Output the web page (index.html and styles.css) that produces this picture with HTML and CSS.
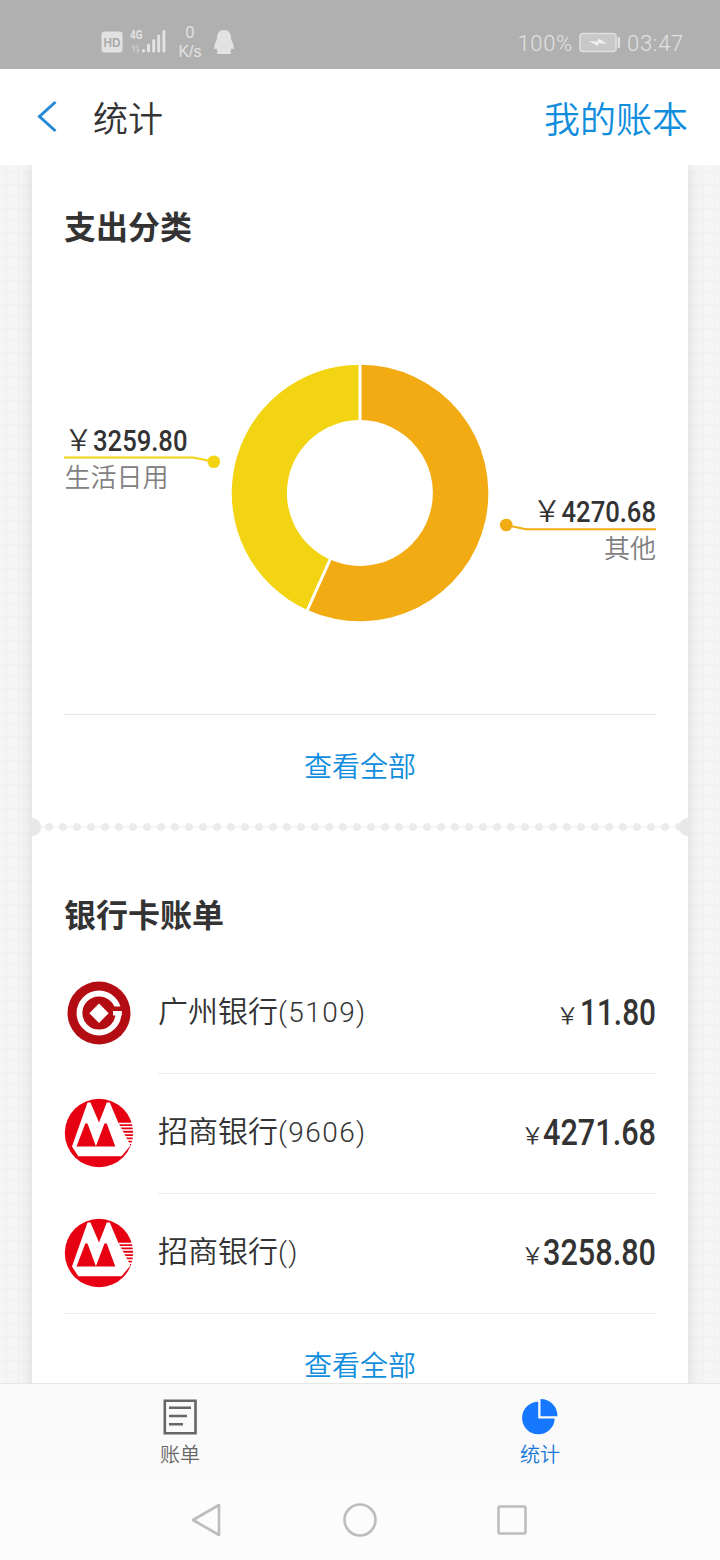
FILE: index.html
```html
<!DOCTYPE html>
<html lang="zh-CN">
<head>
<meta charset="utf-8">
<title>统计</title>
<link rel="stylesheet" href="styles.css">
</head>
<body>
<svg class="defs" width="0" height="0" aria-hidden="true">
  <symbol id="cmb" viewBox="0 0 70 70">
    <circle cx="35" cy="35" r="34.2" fill="#e60012"/>
    <path d="M23.500 4.500h3L35 24.500 42.800 4.500h3L54 24 66.500 47.500 57.500 58.300H14.300L8 48.500Z" fill="#fff"/>
    <path d="M21.300 25.500h2.200L32 48.500H12.500ZM40.500 25.500h2.200L51.300 48.500H31.800Z" fill="#e60012"/>
    <path d="M55 25.500H70M56 28.800H70M57.500 32.100H70M59 35.400H70M61 38.700H70M62.500 42H69.500M64 45.300H69" stroke="#fff" stroke-width="1.500"/>
  </symbol>
</svg>
<div class="screen">
  <header class="status">
    <div class="status-left">
      <svg class="hd" width="22" height="22" viewBox="0 0 22 22"><rect x=".5" y=".5" width="21" height="21" rx="3"/><text x="2.500" y="15.500" textLength="17" lengthAdjust="spacingAndGlyphs">HD</text></svg>
      <svg class="signal" width="37" height="26" viewBox="0 0 37 26">
        <text x="0" y="10" textLength="12.500" lengthAdjust="spacingAndGlyphs">4G</text>
        <path class="faint" d="M4 16v7M4 16l-2 2.500M7.500 16v7l2-2.500"/>
        <path class="bars" d="M13.500 21.500v.5M18.500 16v6M23.700 11.500v10.500M28.700 7v15M33.900 2.500v19.500"/>
      </svg>
      <div class="speed"><span>0</span><span>K/s</span></div>
      <svg class="penguin" width="22" height="26" viewBox="0 0 22 26"><path d="M11 1C6.500 1 4 4 4 8.500c0 2-.8 3.500-1.700 5.500C1.200 16.500.7 19 1.500 20c.6.400 1.200-.2 1.700-.8.3 1.300 1 2.300 1.800 3.300-1.500.8-1.800 2.500.5 2.500H16.500c2.300 0 2-1.700.5-2.500.8-1 1.500-2 1.800-3.300.5.600 1.100 1.200 1.700.8.800-1 .3-3.500-.8-6C18.800 12 18 10.500 18 8.500 18 4 15.500 1 11 1Z"/></svg>
    </div>
    <div class="status-right">
      <span>100%</span>
      <svg width="42" height="22" viewBox="0 0 42 22"><rect x="1" y="1.500" width="36" height="18" rx="3" fill="#c8c8c8" stroke="#dedede" stroke-width="1.600"/><path d="M10 9l8 .5 2-3 8 5.500-8-.7-1.500 2.700Z" fill="#efefef"/><rect x="38.500" y="5" width="2.500" height="11" rx="1.200" fill="#e2e2e2"/></svg>
      <span>03:47</span>
    </div>
  </header>
  <nav class="navbar">
    <svg class="back" width="22" height="34" viewBox="0 0 22 34"><path d="M19.500 2L3.500 16.500l16 14.500"/></svg>
    <h1>统计</h1>
    <a class="book">我的账本</a>
  </nav>
  <main class="content">
    <div class="card">
      <section class="expense">
        <h2>支出分类</h2>
        <svg class="chart" width="592" height="465" viewBox="64 249 592 465">
          <path fill="#f2ab13" d="M360 364.700A128.300 128.300 0 1 1 307.400 610L330 559.600A73 73 0 1 0 360 420Z"/>
          <path fill="#f2d412" d="M360 364.700A128.300 128.300 0 0 0 307.400 610L330 559.600A73 73 0 0 1 360 420Z"/>
          <path class="gap" d="M360 362V423M331.200 557L306.500 612"/>
          <path d="M64 457.500H193L213 461.500" fill="none" stroke="#f2d412" stroke-width="2"/>
          <circle cx="213.800" cy="461.700" r="6.300" fill="#f2d412"/>
          <path d="M656 529.300H526L506 525" fill="none" stroke="#f2ab13" stroke-width="2"/>
          <circle cx="506.200" cy="525" r="6.300" fill="#f2ab13"/>
          <text class="yen" x="64" y="451">&#xFFE5;</text>
          <text class="sum" x="93" y="451" textLength="94.500" lengthAdjust="spacingAndGlyphs">3259.80</text>
          <text class="name" x="64.500" y="487">生活日用</text>
          <text class="yen" x="532.500" y="522">&#xFFE5;</text>
          <text class="sum" x="561.500" y="522" textLength="94.500" lengthAdjust="spacingAndGlyphs">4270.68</text>
          <text class="name" x="656" y="558" text-anchor="end">其他</text>
        </svg>
        <a class="more">查看全部</a>
      </section>
      <div class="perforation"></div>
      <section class="banks">
        <h2>银行卡账单</h2>
        <div class="row">
          <svg class="logo" width="70" height="70" viewBox="0 0 70 70"><circle cx="35" cy="35" r="31.500" fill="#b30c12"/><circle cx="35" cy="35" r="19.500" fill="none" stroke="#fff" stroke-width="5.800"/><path d="M44 28.500H64v4.500H44Z" fill="#b30c12"/><path d="M49 33h8.800v4.500H49Z" fill="#fff"/><path d="M35 25.500l9.700 9.700L35 45l-9.700-9.800Z" fill="#fff"/></svg>
          <div class="line"><span class="bank">广州银行<i>(5109)</i></span><span class="amount"><small>&#xFFE5;</small><svg width="78" height="40"><text x="1" y="31" textLength="76" lengthAdjust="spacingAndGlyphs">11.80</text></svg></span></div>
        </div>
        <div class="row">
          <svg class="logo" width="70" height="70"><use href="#cmb"/></svg>
          <div class="line"><span class="bank">招商银行<i>(9606)</i></span><span class="amount"><small>&#xFFE5;</small><svg width="113" height="40"><text x="-1" y="31" textLength="113" lengthAdjust="spacingAndGlyphs">4271.68</text></svg></span></div>
        </div>
        <div class="row last">
          <svg class="logo" width="70" height="70"><use href="#cmb"/></svg>
          <div class="line"><span class="bank">招商银行<i>()</i></span><span class="amount"><small>&#xFFE5;</small><svg width="113" height="40"><text x="-1" y="31" textLength="113" lengthAdjust="spacingAndGlyphs">3258.80</text></svg></span></div>
        </div>
        <a class="more plain">查看全部</a>
      </section>
    </div>
  </main>
  <footer class="tabs">
    <a class="tab"><svg width="40" height="38" viewBox="0 0 40 38"><path d="M4.800 2.800h30.700v32.400H4.800ZM9 9.700h22M9 18h18M9 26.300h14" fill="none" stroke="#666" stroke-width="2.600"/></svg><span>账单</span></a>
    <a class="tab active"><svg width="40" height="38" viewBox="0 0 40 38"><path d="M18.200 3.700A16.300 16.300 0 1 0 34.700 20.500H18.200Z" fill="#1677ff"/><path d="M20.500 1A17 17 0 0 1 37.500 18.200H20.500Z" fill="#1677ff"/></svg><span>统计</span></a>
  </footer>
  <div class="system">
    <svg width="34" height="36" viewBox="0 0 34 36"><path d="M28 3v30L2 18Z"/></svg>
    <svg width="34" height="36" viewBox="0 0 34 36"><circle cx="17" cy="18" r="15.500"/></svg>
    <svg width="34" height="36" viewBox="0 0 34 36"><rect x="3.500" y="4.500" width="27" height="27" rx="1.500"/></svg>
  </div>
</div>
</body>
</html>
```
FILE: styles.css
```css
* { box-sizing: border-box; }
body { margin: 0; font-family: "Noto Sans CJK SC", sans-serif; color: #333; }
.defs { position: absolute; }
.screen { width: 720px; height: 1560px; display: flex; flex-direction: column; overflow: hidden; background: #fff; }
svg { display: block; flex: none; overflow: visible; }

.status { height: 69px; flex: none; background: #b0b0b0; color: #e2e2e2; display: flex; justify-content: space-between; padding: 0 36px 0 101px; font-family: Roboto, sans-serif; }
.status-left, .status-right { display: flex; align-items: center; }
.status-left { padding-top: 15px; }
.hd rect { fill: #e2e2e2; }
.hd text { fill: #aaa; font: 700 12.5px "Liberation Sans", sans-serif; }
.signal { margin-left: 7px; fill: none; }
.signal text { fill: #e2e2e2; font: 700 12.5px Roboto, sans-serif; }
.signal .bars { stroke: #e2e2e2; stroke-width: 3; stroke-linecap: round; }
.signal .faint { stroke: #c8c8c8; stroke-width: 1.5; }
.speed { width: 26px; margin-left: 10px; display: flex; flex-direction: column; align-items: center; font: 300 16px/19px "Liberation Sans", sans-serif; }
.penguin { margin-left: 10px; fill: #e2e2e2; }
.status-right { padding-top: 17px; gap: 6px; font-size: 22px; font-weight: 350; letter-spacing: 0.7px; }

.navbar { height: 96px; flex: none; display: flex; align-items: center; padding: 0 32px 0 36px; }
.back path { fill: none; stroke: #2389d7; stroke-width: 3; }
h1 { margin: 0 auto 0 35px; font-size: 35px; line-height: 50px; font-weight: 350; }
.book, .more { color: #108ddd; font-weight: 350; }
.book { font-size: 36px; line-height: 50px; }

.content { height: 1218px; flex: none; overflow: hidden; padding: 0 32px; background-color: #f5f5f5; background-image: linear-gradient(#eff1f1 1px, transparent 1px), linear-gradient(90deg, #eff1f1 1px, transparent 1px); background-size: 12px 12px; background-position: 6px 7px; }
.card { height: 1240px; background: #fff; box-shadow: 0 0 16px rgba(0, 0, 0, .1); clip-path: inset(0 -24px); }
h2 { margin: 0; font-size: 32px; line-height: 40px; padding-bottom: 4px; font-weight: 700; }
.expense { height: 652px; padding: 40px 32px 0; }
.chart .gap { fill: none; stroke: #fff; stroke-width: 3; }
.chart .sum { font: 500 30px Roboto, sans-serif; fill: #333; }
.chart .yen { font-size: 29px; font-weight: 350; fill: #333; }
.chart .name { font-size: 26px; font-weight: 350; fill: #808080; }
.more { display: block; border-top: 1px solid #e8e8e8; text-align: center; font-size: 28px; line-height: 101px; }
.perforation { height: 20px; background: radial-gradient(circle at 0 10px, #e8e8e8 8.5px, transparent 9.5px), radial-gradient(circle at 100% 10px, #e8e8e8 8.5px, transparent 9.5px), radial-gradient(circle, #ebebeb 3.5px, transparent 4.3px) 10px 0 / 14px 20px, linear-gradient(#f7f7f7, #f7f7f7) 0 9px / 100% 2px no-repeat; }
.banks { padding: 56px 32px 0; }
.row { display: flex; align-items: center; height: 120px; gap: 24px; }
.row:first-of-type { margin-top: 17px; }
.logo { margin-top: -2px; }
.line { flex: 1; height: 120px; display: flex; align-items: center; justify-content: space-between; border-bottom: 1px solid #ebebeb; }
.last { border-bottom: 1px solid #ebebeb; }
.last .line { border-bottom: 0; }
.last .logo { margin-top: -1px; }
.bank { font-size: 30px; line-height: 44px; font-weight: 350; padding-bottom: 5px; }
.bank i { font: 300 28px/44px Roboto, sans-serif; letter-spacing: 1.4px; }
.amount { display: flex; align-items: center; margin-right: -1px; }
.amount small { font-size: 23px; font-weight: 350; line-height: 40px; }
.amount text { font: 500 36px Roboto, sans-serif; fill: #333; }
.more.plain { border-top: 0; }

.tabs { height: 97px; flex: none; display: flex; background: #fafafa; border-top: 1px solid #e6e6e6; }
.tab { flex: 1; display: flex; flex-direction: column; align-items: center; padding-top: 14px; color: #666; font-size: 20px; line-height: 36px; font-weight: 350; }
.active { color: #1677d8; }
.system { height: 80px; flex: none; display: flex; justify-content: center; align-items: center; gap: 118px; background: #fcfcfc; }
.system svg { fill: none; stroke: #bdbdbd; stroke-width: 2.600; stroke-linejoin: round; }
```
